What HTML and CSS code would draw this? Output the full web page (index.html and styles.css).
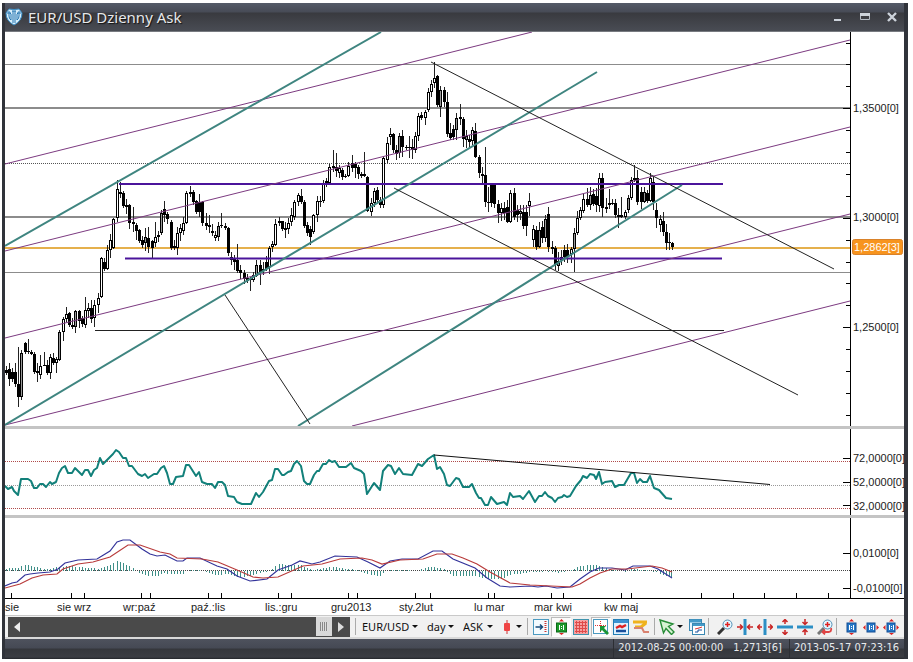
FILE: index.html
```html
<!DOCTYPE html>
<html lang="pl">
<head>
<meta charset="utf-8">
<title>EUR/USD Dzienny Ask</title>
<link rel="stylesheet" href="styles.css">
</head>
<body>
<main class="window">
  <header class="titlebar">
    <svg class="logo" width="18" height="18" viewBox="0 0 18 18" aria-hidden="true">
      <path d="M4 1 Q9 2 14 1 L17 5 Q17 13 9 17 Q1 13 1 5 Z" fill="#d8eefa" stroke="#3a8fc8"/>
      <path d="M8 3V15M10 3V15M4 3V8Q4 11 6 12V6L5 5M14 3V8Q14 11 12 12V6L13 5" fill="none" stroke="#2474b0"/>
      <path d="M2 5H6M12 5H16M7 3H11" fill="none" stroke="#2474b0"/>
    </svg>
    <h1 class="title">EUR/USD Dzienny Ask</h1>
    <div class="controls">
      <button aria-label="Minimalizuj"><svg width="10" height="10"><path d="M1 8H8" stroke="#cdd3db" stroke-width="2"/></svg></button>
      <button aria-label="Maksymalizuj"><svg width="10" height="10"><path d="M.5 1.5H9.500V7.500H.5Z" fill="none" stroke="#b4bbc4"/><path d="M0 2.500H10" stroke="#cdd3db" stroke-width="3"/></svg></button>
      <button aria-label="Zamknij"><svg width="10" height="10"><path d="M1 1L9 9M9 1L1 9" stroke="#cdd3db" stroke-width="2.400"/></svg></button>
    </div>
  </header>

  <section class="panel price" aria-label="Cena">
    <svg class="plot" viewBox="5 32 845 394" preserveAspectRatio="none">
      <g stroke="#8c8c8c" shape-rendering="crispEdges">
        <path d="M5 64.500H850M5 272.500H850"/>
        <path d="M5 108H850M5 217H850" stroke-width="2"/>
        <path d="M5 163H850" stroke="#555" stroke-dasharray="1 1" stroke-width="1"/>
      </g>
      <path d="M5 248H850" stroke="#e5b04c" stroke-width="2"/>
      <g id="candles" shape-rendering="crispEdges"></g>
      <path d="M119 184H723M125 258.500H722" stroke="#4b149b" stroke-width="2"/>
      <path d="M95 330.500H724" stroke="#222"/>
      <path d="M5 164L532 32M5 251L850 40M5 338L850 127M5 425L850 214M352 426L850 301" stroke="#7c3a80"/>
      <path d="M5 246L381 32M5 425L597 72M298 426L682 185" stroke="#3f8580" stroke-width="2"/>
      <path d="M431 62L834 269M394 188L798 395M225 295L310 424" stroke="#222"/>
    </svg>
    <svg class="axis" viewBox="850 32 54 394">
      <path d="M850.5 32V426" stroke="#000" stroke-width="1"/>
      <g class="scale">
        <text x="853" y="112">1,3500[0]</text>
        <text x="853" y="221">1,3000[0]</text>
        <text x="853" y="331">1,2500[0]</text>
      </g>
      <rect x="852.500" y="239.500" width="50" height="15" rx="2" fill="#f7941e" stroke="#d9822a"/>
      <text class="current" x="854" y="251">1,2862[3]</text>
    </svg>
  </section>

  <section class="panel rsi" aria-label="RSI">
    <svg class="plot" viewBox="5 429 845 86" preserveAspectRatio="none">
      <path d="M5 461.500H850M5 508.500H850" stroke="#b04a4a" stroke-dasharray="1 1"/>
      <path d="M5 485.500H850" stroke="#999" stroke-dasharray="1 1"/>
      <polyline fill="none" stroke="#12807a" stroke-width="2" stroke-linejoin="round" points="5,486 8,489 12,487 14,491 18,495 21,479 28,479 31,481 34,488 37,488 40,484 43,484 46,487 50,482 52,484 56,482 59,473 62,468 65,466 68,473 72,473 75,468 82,475 85,470 88,470 91,476 94,470 97,468 100,458 103,464 113,454 116,450 119,452 123,458 126,458 129,466 132,466 138,474 142,476 145,474 148,478 154,474 157,474 161,468 164,466 167,473 170,484 173,484 176,477 183,476 186,465 189,465 196,476 199,472 202,482 207,484 212,484 215,488 218,482 222,482 225,485 228,496 234,497 237,502 242,504 251,504 256,493 259,497 263,492 269,481 272,480 275,469 278,469 282,475 284,475 288,472 291,471 294,464 297,461 301,466 304,481 307,484 310,484 314,475 317,471 319,471 323,464 326,464 329,460 332,462 335,461 339,467 346,467 351,463 354,468 361,471 364,474 367,494 374,483 380,490 383,471 388,465 391,466 395,474 399,468 403,474 412,475 418,464 422,466 428,459 434,455 437,469 440,467 444,474 447,485 450,486 456,478 459,479 463,487 469,487 472,484 476,493 479,498 481,498 485,505 488,505 491,497 497,504 504,502 507,505 510,493 513,497 520,496 523,499 529,491 535,502 539,496 542,496 545,492 548,496 552,498 555,502 558,498 562,497 564,495 567,497 570,496 576,486 581,480 583,476 587,478 590,474 594,475 596,479 599,472 602,484 605,482 612,481 615,487 619,485 624,485 631,473 634,473 637,483 640,479 643,482 647,482 650,476 654,488 659,490 666,498 672,499"/>
      <path d="M434 455L770 484.500" stroke="#111"/>
      <path d="M843 458.500H850M843 482.500H850M843 505.500H850" stroke="#000"/>
    </svg>
    <svg class="axis" viewBox="850 429 54 86">
      <path d="M850.5 429V515" stroke="#000"/>
      <g class="scale">
        <text x="853" y="462">72,0000[0]</text>
        <text x="853" y="486">52,0000[0]</text>
        <text x="853" y="510">32,0000[0]</text>
      </g>
    </svg>
  </section>

  <section class="panel macd" aria-label="MACD">
    <svg class="plot" viewBox="5 518 845 81" preserveAspectRatio="none">
      <path d="M5 570.500H850" stroke="#444" stroke-dasharray="1 1"/>
      <path id="histogram" stroke="#3f8f88" shape-rendering="crispEdges"/>
      <polyline id="macd-line" fill="none" stroke="#33339a" stroke-width="1.200" points="5,586 12,583 17,582 25,575 30,574 38,573 50,572 58,569 65,563 78,560 97,559 110,551 117,542 123,540 130,540 142,549 150,554 157,556 165,555 177,561 183,561 187,558 200,558 217,566 227,569 237,576 250,581 267,579 278,570 292,565 300,561 312,564 320,562 335,556 357,557 368,562 380,568 390,561 402,559 418,559 433,551 442,551 453,559 475,568 487,578 500,586 510,587 530,586 538,587 546,586 557,588 570,587 580,579 590,572 599,568 612,568 625,570 633,566 650,566 658,569 672,578"/>
      <polyline id="signal-line" fill="none" stroke="#b83a3a" stroke-width="1.200" points="5,588 20,584 32,578 43,575 57,574 63,569 78,564 93,562 110,557 128,545 140,545 160,552 170,554 177,558 202,559 218,562 237,570 253,577 263,578 278,577 303,566 322,564 340,559 362,558 372,560 382,564 400,560 423,559 437,554 452,554 463,558 477,564 490,572 510,583 530,585 572,587 580,584 590,578 600,573 612,569 627,569 652,566 662,568 672,572"/>
      <path d="M843 553.500H850M843 588.500H850" stroke="#000"/>
      <path id="months" stroke="#000" shape-rendering="crispEdges"/>
      <path d="M5 598.500H850" stroke="#000"/>
    </svg>
    <svg class="axis" viewBox="850 518 54 81">
      <path d="M850.5 518V598.500" stroke="#000"/>
      <path d="M850 598.500H904" stroke="#000"/>
      <g class="scale">
        <text x="853" y="557">0,0100[0]</text>
        <text x="853" y="592">-0,0100[0]</text>
      </g>
    </svg>
  </section>

  <div class="timeline">
    <span>sie</span><span>sie wrz</span><span>wr:paź</span><span>paź.:lis</span><span>lis.:gru</span><span>gru2013</span><span>sty.2lut</span><span>lu mar</span><span>mar kwi</span><span>kw maj</span>
  </div>

  <div class="toolbar">
    <div class="scroll">
      <button aria-label="Przewiń w lewo"><svg width="6" height="10"><path d="M6 0V10L0 5Z" fill="#eee"/></svg></button>
      <input type="range" min="0" max="100" value="100" aria-label="Przewijanie wykresu">
      <button aria-label="Przewiń w prawo"><svg width="6" height="10"><path d="M0 0V10L6 5Z" fill="#ddd"/></svg></button>
    </div>
    <i class="sep"></i>
    <label class="drop pair"><select aria-label="Instrument"><option>EUR/USD</option></select></label>
    <label class="drop period"><select aria-label="Interwał"><option>day</option></select></label>
    <label class="drop side"><select aria-label="Strona"><option>ASK</option></select></label>
    <button class="menu candle" aria-label="Typ wykresu"><svg width="8" height="16"><path d="M4 1V15" stroke="#c33"/><rect x="1" y="4" width="6" height="8" rx="1" fill="#ef4444"/></svg></button>
    <i class="sep"></i>
    <button aria-label="Przesuń do końca"><svg width="16" height="16"><rect x=".5" y=".5" width="15" height="15" fill="#f4fbff" stroke="#4b9ac0"/><path d="M2.500 8H9M7 5.500L9.500 8L7 10.500" fill="none" stroke="#164a7a" stroke-width="1.500"/><path d="M12.500 2V14" stroke="#c33" stroke-width="2" stroke-dasharray="1 1"/></svg></button>
    <button class="on" aria-label="Autoskala"><svg width="16" height="16"><rect x="3.500" y="4" width="10" height="9" fill="#1d9a2b" stroke="#0b6917"/><path d="M6.500 6V11M10.500 6V11M8.500 7V8M8.500 9V10" stroke="#fff"/><path d="M6 2.500L8.500 0L11 2.500ZM6 14L8.500 16L11 14Z" fill="#d22"/></svg></button>
    <button aria-label="Siatka"><svg width="16" height="16"><rect x=".5" y=".5" width="15" height="15" fill="#f6a0a0" stroke="#3e93ad"/><path d="M2 3.500H14M2 6.500H14M2 9.500H14M2 12.500H14M3.500 2V14M6.500 2V14M9.500 2V14M12.500 2V14" stroke="#df4a4a"/></svg></button>
    <button class="on" aria-label="Celownik"><svg width="16" height="16"><rect x=".5" y=".5" width="14" height="14" fill="#fff" stroke="#4b9ac0"/><path d="M7.500 2V14M2 6.500H14" stroke="#d33" stroke-dasharray="1 1"/><path d="M7 7H13L11 9L16 14L14 16L9 11L7 13Z" fill="#199434"/></svg></button>
    <button aria-label="Okno danych"><svg width="16" height="16"><rect x=".5" y=".5" width="15" height="15" fill="#dff2ff" stroke="#237fb6"/><path d="M1 2.500H15" stroke="#3b92d2" stroke-width="3"/><path d="M3 9L7 7L9 8L13 6" fill="none" stroke="#d22" stroke-width="2.500"/><path d="M3 12H13" stroke="#174f9c" stroke-width="2.500"/></svg></button>
    <button aria-label="Poziomy"><svg width="16" height="16"><path d="M0 3H14M2 8H8L13 4" fill="none" stroke="#efb21e" stroke-width="3"/><path d="M1 9H9L11 13H16" fill="none" stroke="#d98270" stroke-width="2"/></svg></button>
    <i class="sep"></i>
    <button class="menu cursor" aria-label="Kursor"><svg width="16" height="16"><path d="M1 1L14 5L9.500 7.500L15 13L12.500 15.500L7 9.500L4.500 14Z" fill="#d6f3d3" stroke="#278c37" stroke-width="1.400"/></svg></button>
    <button aria-label="Szablony"><svg width="16" height="16"><rect x=".5" y=".5" width="12" height="11" fill="#e6f6ff" stroke="#3a88b2"/><path d="M1 2H12" stroke="#449bc8" stroke-width="3"/><rect x="3.500" y="4.500" width="12" height="11" fill="#fff" stroke="#3a88b2"/><path d="M4 6H15" stroke="#449bc8" stroke-width="2"/><path d="M6 10L10 9L13 8" stroke="#d33"/><path d="M6 13H9V11H13" fill="none" stroke="#174f9c"/></svg></button>
    <i class="sep wide"></i>
    <button aria-label="Powiększ"><svg width="16" height="16"><path d="M1 15L7 9" stroke="#333" stroke-width="3"/><circle cx="10.500" cy="5.500" r="4.500" fill="#e4f6ff" stroke="#5592b7"/><path d="M8 5.500H13M10.500 3V8" stroke="#d22" stroke-width="1.500"/></svg></button>
    <button aria-label="Zagęść w poziomie"><svg width="16" height="16"><path d="M8 0V16" stroke="#2c8fc5" stroke-width="3"/><path d="M0 8H5M3 5.500L5.500 8L3 10.500M16 8H11M13 5.500L10.500 8L13 10.500" fill="none" stroke="#c92424" stroke-width="1.500"/></svg></button>
    <button aria-label="Rozciągnij w poziomie"><svg width="16" height="16"><path d="M8 0V16" stroke="#2c8fc5" stroke-width="3"/><path d="M5 8H1M3 5.500L.5 8L3 10.500M11 8H15M13 5.500L15.500 8L13 10.500" fill="none" stroke="#c92424" stroke-width="1.500"/></svg></button>
    <button aria-label="Rozciągnij w pionie"><svg width="16" height="16"><path d="M0 8H16" stroke="#2c8fc5" stroke-width="3"/><path d="M8 5V1M5.500 3L8 .5L10.500 3M8 11V15M5.500 13L8 15.500L10.500 13" fill="none" stroke="#c92424" stroke-width="1.500"/></svg></button>
    <button aria-label="Zagęść w pionie"><svg width="16" height="16"><path d="M0 8H16" stroke="#2c8fc5" stroke-width="3"/><path d="M8 0V5M5.500 3L8 5.500L10.500 3M8 16V11M5.500 13L8 10.500L10.500 13" fill="none" stroke="#c92424" stroke-width="1.500"/></svg></button>
    <button aria-label="Przywróć skalę"><svg width="16" height="16"><path d="M1 15L7 9" stroke="#777" stroke-width="3"/><circle cx="10.500" cy="5.500" r="4.500" fill="#e4f6ff" stroke="#5592b7"/><path d="M8 5.500H13M10.500 3V8" stroke="#d22" stroke-width="1.500"/><path d="M6 13H12Q15 12 14 9M8 10.500L5.500 13L8 15.500" fill="none" stroke="#df4545" stroke-width="1.800"/></svg></button>
    <i class="sep end"></i>
    <button aria-label="Dopasuj wysokość"><svg width="16" height="16"><rect x="4" y="4" width="9" height="9" fill="#2778c7" stroke="#124c94"/><path d="M6.500 6V11M10.500 6V11M8.500 7V8M8.500 9V10" stroke="#fff"/><path d="M6 2.500L8.500 0L11 2.500ZM6 14L8.500 16L11 14Z" fill="#d22"/></svg></button>
    <button aria-label="Dopasuj szerokość"><svg width="16" height="16"><rect x="4" y="4" width="8" height="9" fill="#2778c7" stroke="#124c94"/><path d="M6.500 6V11M10.500 6V11M8.500 7V8M8.500 9V10" stroke="#fff"/><path d="M2.500 6L0 8.500L2.500 11ZM13.500 6L16 8.500L13.500 11Z" fill="#d22"/></svg></button>
    <button aria-label="Dopasuj wszystko"><svg width="16" height="16"><rect x="4" y="4" width="8" height="9" fill="#2778c7" stroke="#124c94"/><path d="M6.500 6V11M10.500 6V11M8.500 7V8M8.500 9V10" stroke="#fff"/><path d="M2.500 6L0 8.500L2.500 11ZM13.500 6L16 8.500L13.500 11ZM6 2.500L8.500 0L11 2.500ZM6 14L8.500 16L11 14Z" fill="#d22"/></svg></button>
  </div>

  <footer class="status">
    <span class="cell"><time>2012-08-25 00:00:00</time><span>1,2713[6]</span></span>
    <span class="cell"><time>2013-05-17 07:23:16</time></span>
  </footer>
</main>
<script src="chart.js"></script>
</body>
</html>
```
FILE: styles.css
```css
* { box-sizing: border-box; }
body { margin: 0; background: #fff; font-family: "Liberation Sans", Arial, sans-serif; }
button { border: 0; padding: 0; margin: 0; background: none; display: flex; align-items: center; justify-content: center; }
svg { display: block; flex: none; }

.window { margin: 3px 5px 3px 2px; border: solid #30333a; border-width: 0 4px 0 3px; background: #30333a; }

.titlebar {
  display: flex; align-items: center; height: 29px; padding: 0 2px 0 0;
  background: linear-gradient(#555b68 0, #474b56 9px, #393a3f 10px, #494c54 28px);
  border-bottom: 1px solid #777a80;
}
.title {
  flex: 1; margin: 0 0 0 5px; color: #e6e8ea; font: 400 15px/24px "Noto Sans", "Open Sans", sans-serif;
  text-shadow: 1px 1px 1px #111;
}
.controls { display: flex; gap: 6px; }
.controls button { width: 21px; height: 20px; }

.panel { display: flex; background: #fff; }
.price { border-bottom: 3px solid #c4c4c4; }
.rsi { border-bottom: 3px solid #c4c4c4; }
.plot { flex: 1 1 0; min-width: 0; width: 100%; }
.axis { width: 54px; }
.price svg { height: 394px; }
.rsi svg { height: 86px; }
.macd svg { height: 81px; }
.scale, .current { font-size: 11px; fill: #1c1c1c; }
.current { fill: #fff; }

.timeline {
  display: grid; height: 16px; background: #fff; color: #1c1c1c; font-size: 11px; line-height: 17px; white-space: nowrap;
  grid-template-columns: 52fr 66fr 68fr 74fr 66fr 68fr 75fr 60fr 70fr 300fr;
}

.toolbar {
  display: flex; align-items: center; height: 24px; padding: 0 3px;
  background: #f1f1f1; border-top: 1px solid #c9c9c9; border-bottom: 2px solid #d9d9d9;
}
.scroll { flex: 1; display: flex; height: 20px; background: #4a4a4a; min-width: 80px; }
.scroll input { flex: 1; min-width: 0; margin: 0; height: 20px; appearance: none; background: none; }
.scroll input::-webkit-slider-thumb {
  appearance: none; width: 16px; height: 19px; border: 4px solid #d9d9d9; border-width: 5px 4px;
  background: repeating-linear-gradient(90deg, #888 0 1px, #ddd 1px 2px);
}
.toolbar button { width: 20px; height: 20px; flex: none; }
.toolbar .scroll button { width: 18px; }
.toolbar .on { background: #fbfbfb; border: 1px solid #ccc; border-color: #bbb #fff #fff #bbb; }
.sep { width: 1px; height: 17px; margin: 0 3px; background: #aaa; flex: none; }
.scroll + .sep { margin: 0 6px 0 5px; }
.sep.wide { margin: 0 6px 0 1px; }
.sep.end { margin: 0 4px 0 1px; }
.drop { display: flex; align-items: center; flex: none; margin-right: 9px; }
.drop select {
  appearance: none; border: 0; padding: 0; margin: 0; background: none; color: #111;
  font: 11px/18px "Noto Sans", "Open Sans", sans-serif; flex: 1; min-width: 0; width: 100%;
}
.pair { width: 56px; }
.period { width: 27px; }
.side { width: 30px; }
.drop::after, .menu::after { content: ""; border: solid transparent; border-width: 3px 3px 0; border-top-color: #111; flex: none; }
.toolbar .menu { justify-content: space-between; }
.toolbar .candle { width: 19px; margin: 0 2px 0 1px; }
.toolbar .cursor { width: 24px; margin: 0 4px 0 1px; }

.status {
  display: flex; justify-content: flex-end; height: 20px; color: #e8eaec;
  background: linear-gradient(#4e525d 0, #454954 9px, #35373c 10px, #3b3d43 18px, #24262a);
  font: 11px/18px "DejaVu Sans Condensed", "Noto Sans", sans-serif; white-space: nowrap;
}
.cell { display: flex; gap: 10px; padding: 0 7px 0 4px; border-left: 1px solid #2c2e33; }
.cell:last-child { padding-right: 5px; }
```
FILE: chart.js
```js
// One row per day: high, body top, body bottom, low, fill (k black, w hollow, g grey)
const days = `366 370 373 375 k,363 369 379 386 k,368 372 379 382 k,363 372 384 387 k,347 384 397 407 k,350 353 397 400 g,342 343 352 354 k,339 351 352 354 k,350 352 354 355 k,352 354 372 374 k,363 371 373 382 k,355 366 375 379 w,352 365 366 366 k,360 365 373 375 k,354 357 373 379 w,353 358 363 365 k,357 359 363 373 w,330 332 360 361 g,317 319 332 341 w,307 314 319 322 w,312 313 325 327 k,318 325 327 329 k,310 311 327 333 g,310 311 321 328 k,316 318 324 327 k,297 310 325 328 w,303 308 311 318 w,300 308 319 323 k,300 305 318 327 w,293 298 305 313 w,257 258 297 298 w,258 262 269 271 k,245 250 269 270 w,234 240 250 258 w,218 219 248 249 w,180 189 218 222 w,182 192 194 198 w,191 193 206 208 k,199 205 207 214 k,204 205 223 229 k,207 222 224 232 w,223 225 231 240 k,229 230 241 243 k,236 240 245 248 k,228 237 243 251 g,227 238 247 253 k,240 241 248 258 k,222 237 243 247 w,231 235 237 242 w,210 213 233 235 g,201 209 215 222 k,212 214 219 224 k,220 222 248 250 k,240 246 248 250 k,227 233 248 255 w,224 228 233 241 w,217 223 231 235 w,191 193 223 224 w,186 192 194 197 w,190 192 202 205 k,200 201 212 214 k,194 202 212 217 k,201 202 223 226 k,213 223 226 230 k,215 225 227 233 k,224 231 233 236 k,231 235 238 241 w,222 226 237 241 g,213 225 226 228 w,223 226 228 230 k,227 228 253 256 k,252 257 260 265 k,255 259 262 270 k,244 260 271 273 k,265 270 273 279 k,270 273 279 284 k,274 278 281 283 k,277 279 280 291 k,272 275 280 282 w,260 265 276 277 g,260 265 272 285 k,262 269 271 275 k,256 262 269 271 k,246 248 267 274 w,241 244 247 252 w,219 224 245 246 w,217 221 223 226 w,221 221 229 231 k,222 228 230 238 k,218 223 229 234 w,208 215 222 226 w,200 202 217 220 w,193 195 202 206 w,189 196 202 204 k,200 202 226 228 k,222 225 233 236 k,226 229 237 245 k,214 215 232 234 w,196 201 215 222 w,196 201 202 207 k,180 183 201 203 w,178 181 183 187 k,164 167 183 185 w,150 166 168 172 k,153 167 171 177 k,165 168 173 178 w,168 170 177 180 k,174 176 177 178 k,162 166 176 177 w,155 163 168 172 k,162 164 168 178 k,165 167 174 179 k,172 174 176 178 k,152 174 176 177 k,176 177 211 212 k,198 203 212 216 w,188 191 203 207 w,187 190 200 203 k,197 200 205 208 k,157 158 205 208 w,137 143 160 163 w,128 134 137 145 w,133 134 150 153 k,145 150 154 160 k,133 136 153 158 g,130 136 147 157 k,145 147 148 150 k,136 147 148 158 k,139 147 150 159 k,132 136 150 153 w,113 116 136 141 w,112 115 118 120 k,110 112 118 125 w,88 92 110 112 w,80 84 92 97 w,62 78 83 88 w,75 76 105 107 k,86 90 107 117 g,87 90 102 107 k,92 102 134 137 k,123 133 138 140 k,125 129 137 140 k,113 118 130 140 g,104 117 119 125 k,117 119 139 147 k,130 136 140 148 g,135 139 142 147 k,127 130 141 145 w,123 131 157 158 k,155 157 173 178 k,167 174 176 184 k,147 175 202 207 k,187 202 203 212 k,183 185 203 207 k,184 185 204 208 k,200 204 213 223 k,203 208 213 221 w,202 208 213 220 k,200 207 222 223 k,190 193 222 223 w,188 193 217 220 k,205 210 215 222 k,205 211 214 220 g,205 212 226 229 k,205 212 226 236 k,193 201 206 216 w,225 229 240 247 w,226 230 247 250 k,222 230 247 248 g,221 227 238 243 k,215 219 238 242 g,207 214 247 252 k,241 247 249 254 k,246 248 265 270 k,252 261 266 271 g,250 257 260 265 k,245 250 257 262 k,244 250 257 263 k,247 249 254 263 w,228 233 249 272 g,211 218 233 235 w,207 210 218 220 w,194 199 211 213 w,188 199 205 207 k,187 195 205 210 g,189 194 204 206 k,188 196 205 212 k,173 178 206 212 w,173 178 208 217 k,198 207 209 213 k,189 203 205 209 k,199 203 204 205 k,199 203 215 218 k,208 215 217 228 k,197 215 217 218 k,210 212 217 219 w,195 198 210 213 g,177 180 198 200 w,165 178 180 182 w,170 178 202 205 k,187 192 202 209 k,187 192 202 203 g,190 193 201 203 k,173 178 201 202 w,177 182 202 210 k,203 210 218 228 k,215 219 225 232 w,212 221 232 236 k,224 232 243 250 k,233 242 243 250 k,242 243 247 250 k`
  .split(",").map(row => row.split(" "));

const firstDay = 6;
const dayWidth = 3.175;
const dayX = i => Math.floor(firstDay + i * dayWidth);

const bars = (x, w, top, bottom, fill) =>
  `<rect x="${x}" y="${top}" width="${w}" height="${Math.max(1, bottom - top)}" fill="${fill}"/>`;

document.getElementById("candles").innerHTML = days.map(([high, top, bottom, low, kind], i) => {
  const x = dayX(i);
  const shape = bars(x, 1, +high, +low, "#222") + bars(x - 1, 3, +top, +bottom, "#000");
  if (kind === "k" || bottom - top < 3) return shape;
  return shape + bars(x, 1, +top + 1, +bottom - 1, kind === "w" ? "#fff" : "#999");
}).join("");

// Histogram: distance between the MACD and signal lines
const readLine = id => document.getElementById(id).getAttribute("points").split(" ").map(p => p.split(",").map(Number));
function valueAt(line, x) {
  const k = Math.max(1, line.findIndex(p => p[0] >= x));
  const [x0, y0] = line[k - 1], [x1, y1] = line[k];
  return y0 + (y1 - y0) * (x - x0) / (x1 - x0);
}
const macd = readLine("macd-line"), signal = readLine("signal-line");
document.getElementById("histogram").setAttribute("d", days.map((_, i) => {
  const x = Math.min(dayX(i), 671);
  return `M${x + .5} 571V${571 + Math.round(valueAt(macd, x) - valueAt(signal, x))}`;
}).join(""));

// Month boundaries
document.getElementById("months").setAttribute("d",
  [11, 71, 84, 141, 150, 208, 221, 278, 291, 348, 357, 415, 430, 488, 494, 551, 563, 621, 631, 701, 733, 764, 796, 828]
    .map(x => `M${x + .5} 593V598`).join(""));

// Price scale ticks, every fifth one is labelled
const plot = document.querySelector(".price .plot");
let ticks = "";
for (let i = 0; i < 18; i++) {
  const y = Math.round(42.5 + i * 21.9) + .5;
  ticks += `M${i % 5 === 3 ? 843 : 846} ${y}H850`;
}
plot.insertAdjacentHTML("beforeend", `<path d="${ticks}" stroke="#000"/>`);
```
